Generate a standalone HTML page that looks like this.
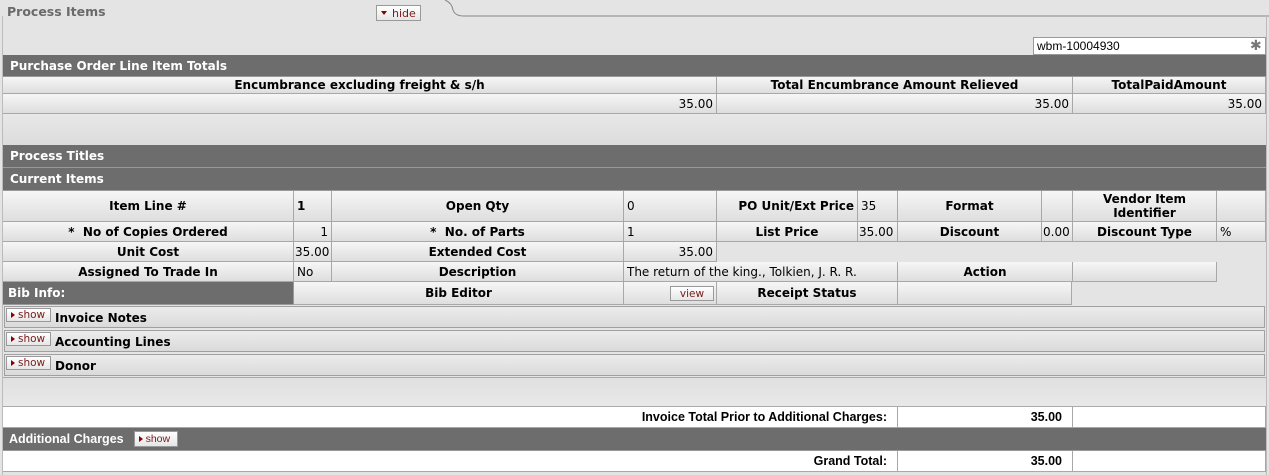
<!DOCTYPE html>
<html><head><meta charset="utf-8"><style>
*{box-sizing:border-box;margin:0;padding:0}
body{width:1269px;height:475px;background:#e4e4e4;position:relative;overflow:hidden;font-family:"DejaVu Sans",Verdana,sans-serif;font-size:12px;color:#000}
.a{position:absolute}
.c{position:absolute;background:linear-gradient(#f6f6f6,#dedede);border-right:1px solid #a8a8a8;border-bottom:1px solid #a8a8a8;display:flex;align-items:center;padding:0 3px;font-size:12px;line-height:14px;white-space:nowrap}
.h{font-weight:bold;justify-content:center;text-align:center}
.r{justify-content:flex-end}
.bar{position:absolute;background:#6d6d6d;color:#fff;font-weight:bold;font-size:12px;display:flex;align-items:center;padding-left:7px;border-bottom:1px solid #999}
.btn{position:absolute;background:linear-gradient(#fff,#e6e6e6);border:1px solid #999;font-size:10.5px;font-weight:normal;color:#7a1a1a;display:flex;align-items:center;padding-left:4px}
.tri{display:inline-block;width:0;height:0;border-top:3px solid transparent;border-bottom:3px solid transparent;border-left:4px solid #8b0000;margin-right:3px}
.trd{display:inline-block;width:0;height:0;border-left:3px solid transparent;border-right:3px solid transparent;border-top:4px solid #8b0000;margin-right:5px}
.sh{position:absolute;left:4px;width:1261px;height:22px;border:1px solid #a0a0a0;background:linear-gradient(#ececec,#dadada);font-weight:bold;font-size:12px}
.w{position:absolute;background:#fff;border-bottom:1px solid #a8a8a8;border-right:1px solid #a8a8a8;display:flex;align-items:center;justify-content:flex-end;padding-right:10px;font-weight:bold;font-family:"Liberation Sans",sans-serif;font-size:12.5px}
</style></head><body>
<div class="a" style="left:7px;top:4px;font-weight:bold;font-size:12.5px;color:#6a6a6a">Process Items</div>
<div class="btn" style="left:376px;top:5px;width:45px;height:16px;font-size:11px"><span class="trd"></span>hide</div>
<svg class="a" style="left:440px;top:0" width="829" height="20"><path d="M5 0 Q12 3 13 10 Q15 16 24 16 L829 16" fill="none" stroke="#888" stroke-width="1"/></svg>
<div class="a" style="left:2px;top:16px;width:1265px;height:459px;border-left:1px solid #bbb;border-right:1px solid #bbb"></div>
<div class="a" style="left:1033px;top:37px;width:233px;height:18px;background:#fff;border:1px solid #999;font-family:'Liberation Sans',sans-serif;font-size:12px;padding:1px 3px">wbm-10004930</div>
<div class="a" style="left:1250px;top:38px;color:#777;font-size:14px;font-weight:bold">✱</div>

<div class="bar" style="left:3px;top:55px;width:1263px;height:22px">Purchase Order Line Item Totals</div>
<div class="c h" style="left:3px;top:77px;width:714px;height:17px">Encumbrance excluding freight &amp; s/h</div>
<div class="c h" style="left:717px;top:77px;width:356px;height:17px">Total Encumbrance Amount Relieved</div>
<div class="c h" style="left:1073px;top:77px;width:193px;height:17px">TotalPaidAmount</div>
<div class="c r" style="left:3px;top:94px;width:714px;height:20px">35.00</div>
<div class="c r" style="left:717px;top:94px;width:356px;height:20px">35.00</div>
<div class="c r" style="left:1073px;top:94px;width:193px;height:20px">35.00</div>
<div class="a" style="left:3px;top:114px;width:1263px;height:31px;background:linear-gradient(#e8e8e8,#dcdcdc)"></div>

<div class="bar" style="left:3px;top:145px;width:1263px;height:23px">Process Titles</div>
<div class="bar" style="left:3px;top:168px;width:1263px;height:23px">Current Items</div>

<div class="c h" style="left:3px;top:191px;width:291px;height:31px">Item Line #</div>
<div class="c" style="left:294px;top:191px;width:38px;height:31px;font-weight:bold">1</div>
<div class="c h" style="left:332px;top:191px;width:292px;height:31px">Open Qty</div>
<div class="c" style="left:624px;top:191px;width:93px;height:31px">0</div>
<div class="c h" style="left:717px;top:191px;width:141px;height:31px;justify-content:flex-end">PO Unit/Ext Price</div>
<div class="c" style="left:858px;top:191px;width:40px;height:31px">35</div>
<div class="c h" style="left:898px;top:191px;width:144px;height:31px">Format</div>
<div class="c" style="left:1042px;top:191px;width:31px;height:31px"></div>
<div class="c h" style="left:1073px;top:191px;width:144px;height:31px">Vendor Item<br>Identifier</div>
<div class="c" style="left:1217px;top:191px;width:49px;height:31px"></div>

<div class="c h" style="left:3px;top:222px;width:291px;height:20px">*&nbsp; No of Copies Ordered</div>
<div class="c r" style="left:294px;top:222px;width:38px;height:20px">1</div>
<div class="c h" style="left:332px;top:222px;width:292px;height:20px">*&nbsp; No. of Parts</div>
<div class="c" style="left:624px;top:222px;width:93px;height:20px">1</div>
<div class="c h" style="left:717px;top:222px;width:141px;height:20px">List Price</div>
<div class="c" style="left:858px;top:222px;width:40px;height:20px;padding:0 1px">35.00</div>
<div class="c h" style="left:898px;top:222px;width:144px;height:20px">Discount</div>
<div class="c" style="left:1042px;top:222px;width:31px;height:20px;padding:0 1px">0.00</div>
<div class="c h" style="left:1073px;top:222px;width:144px;height:20px">Discount Type</div>
<div class="c" style="left:1217px;top:222px;width:49px;height:20px">%</div>

<div class="c h" style="left:3px;top:242px;width:291px;height:20px">Unit Cost</div>
<div class="c" style="left:294px;top:242px;width:38px;height:20px;padding:0 1px">35.00</div>
<div class="c h" style="left:332px;top:242px;width:292px;height:20px">Extended Cost</div>
<div class="c r" style="left:624px;top:242px;width:93px;height:20px">35.00</div>

<div class="c h" style="left:3px;top:262px;width:291px;height:20px">Assigned To Trade In</div>
<div class="c" style="left:294px;top:262px;width:38px;height:20px">No</div>
<div class="c h" style="left:332px;top:262px;width:292px;height:20px">Description</div>
<div class="c" style="left:624px;top:262px;width:274px;height:20px">The return of the king., Tolkien, J. R. R.</div>
<div class="c h" style="left:898px;top:262px;width:175px;height:20px">Action</div>
<div class="c" style="left:1073px;top:262px;width:144px;height:20px"></div>

<div class="bar" style="left:3px;top:282px;width:291px;height:23px;padding-left:5px;border-right:1px solid #999">Bib Info:</div>
<div class="c h" style="left:294px;top:282px;width:330px;height:23px">Bib Editor</div>
<div class="c" style="left:624px;top:282px;width:93px;height:23px"></div>
<div class="btn" style="left:670px;top:286px;width:44px;height:15px;justify-content:center;padding:0">view</div>
<div class="c h" style="left:717px;top:282px;width:181px;height:23px">Receipt Status</div>
<div class="c" style="left:898px;top:282px;width:174px;height:23px"></div>

<div class="sh" style="top:306px"><div class="btn" style="left:1px;top:1px;width:45px;height:14px"><span class="tri"></span>show</div><span class="a" style="left:50px;top:4px">Invoice Notes</span></div>
<div class="sh" style="top:330px"><div class="btn" style="left:1px;top:1px;width:45px;height:14px"><span class="tri"></span>show</div><span class="a" style="left:50px;top:4px">Accounting Lines</span></div>
<div class="sh" style="top:354px"><div class="btn" style="left:1px;top:1px;width:45px;height:14px"><span class="tri"></span>show</div><span class="a" style="left:50px;top:4px">Donor</span></div>
<div class="a" style="left:3px;top:377px;width:1263px;height:30px;background:linear-gradient(#e0e0e0,#e8e8e8);border-top:1px solid #aaa;border-bottom:1px solid #aaa"></div>

<div class="w" style="left:3px;top:407px;width:895px;height:21px">Invoice Total Prior to Additional Charges:</div>
<div class="w" style="left:898px;top:407px;width:175px;height:21px">35.00</div>
<div class="w" style="left:1073px;top:407px;width:193px;height:21px"></div>
<div class="bar" style="left:3px;top:428px;width:1263px;height:23px;padding-left:6px;font-family:'Liberation Sans',sans-serif;font-size:12.5px">Additional Charges<div class="btn" style="position:relative;margin-left:10px;width:44px;height:16px;font-size:10.5px"><span class="tri"></span>show</div></div>
<div class="w" style="left:3px;top:451px;width:895px;height:21px">Grand Total:</div>
<div class="w" style="left:898px;top:451px;width:175px;height:21px">35.00</div>
<div class="w" style="left:1073px;top:451px;width:193px;height:21px"></div>
</body></html>
